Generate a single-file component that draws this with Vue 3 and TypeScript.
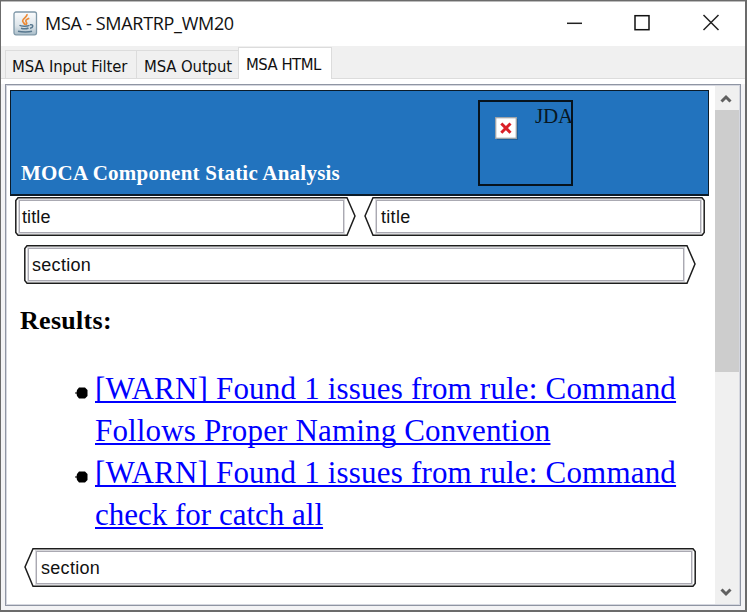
<script setup lang="ts">
import { ref } from 'vue'

type Side = 'open' | 'close'
interface Tag { label: string; side: Side; width: number }

const tabs = ['MSA Input Filter', 'MSA Output', 'MSA HTML']
const active = ref('MSA HTML')

const titleTags: Tag[] = [
  { label: 'title', side: 'open', width: 341 },
  { label: 'title', side: 'close', width: 341 },
]
const sectionOpen: Tag = { label: 'section', side: 'open', width: 672 }
const sectionClose: Tag = { label: 'section', side: 'close', width: 672 }

const results: string[][] = [
  ['[WARN] Found 1 issues from rule: Command', 'Follows Proper Naming Convention'],
  ['[WARN] Found 1 issues from rule: Command', 'check for catch all'],
]

// Outline of a tag marker: chamfered corners on one side, a point on the other.
function outline(tag: Tag): string {
  const w = tag.width
  return tag.side === 'open'
    ? `M3 .8H${w - 9}L${w - 1} 19L${w - 9} 38.2H3L.8 35.5V3.5Z`
    : `M${w - 3} .8H9L1 19L9 38.2H${w - 3}L${w - 0.8} 35.5V3.5Z`
}
</script>

<template>
  <div class="window">
    <header class="titlebar">
      <svg class="java" width="25" height="25" viewBox="0 0 25 25">
        <defs>
          <linearGradient id="jbg" x1="0" y1="0" x2="0" y2="1">
            <stop offset="0" stop-color="#fbfcfd" />
            <stop offset=".6" stop-color="#dde5ea" />
            <stop offset="1" stop-color="#a9bdc9" />
          </linearGradient>
        </defs>
        <rect x="1" y="1" width="22.5" height="22.8" rx="2" fill="url(#jbg)" stroke="#7f98a8" stroke-width="1.3" />
        <path d="M13.8 3.2C15 6 9.2 7.3 9.6 10C9.8 11.5 11.7 12.4 11.9 14M16.3 7.2C13.2 8.4 12 9.7 13.3 11.2C14.2 12.3 13.5 13.1 12.7 13.7" fill="none" stroke="#ec8a35" stroke-width="1.7" />
        <path d="M6.5 14.2C8 15.5 14 15.5 16.5 14.4M8 17.2C10.5 18 13.5 17.9 15.5 17M5 20.2C9 21.2 16 21.2 19 20.2M17 13.8C20.8 13 20.5 16.7 17 17.2" fill="none" stroke="#58788f" stroke-width="1.5" />
      </svg>
      <span class="caption">MSA - SMARTRP_WM20</span>
      <svg class="controls" width="160" height="20" viewBox="0 0 160 20">
        <path d="M1 10.3H16" stroke="#222" stroke-width="1.5" />
        <rect x="69" y="2.7" width="14" height="14" fill="none" stroke="#111" stroke-width="1.5" />
        <path d="M137.5 2L152.5 17M152.5 2L137.5 17" stroke="#222" stroke-width="1.5" />
      </svg>
    </header>

    <nav class="tabs">
      <button
        v-for="(tab, i) in tabs"
        :key="tab"
        class="tab"
        :class="['tab-' + i, { active: tab === active }]"
        @click="active = tab"
      ><span>{{ tab }}</span></button>
    </nav>

    <div class="pane">
      <div class="viewport">
        <main class="page">
          <section class="banner">
            <h1>MOCA Component Static Analysis</h1>
            <div class="logo">
              <svg class="broken" width="24" height="24" viewBox="0 0 24 24">
                <rect x="2" y="2" width="21" height="21" fill="#174f80" opacity=".55" />
                <rect x=".7" y=".7" width="20.6" height="20.6" fill="#fff" stroke="#a2a5a8" stroke-width="1.3" />
                <path d="M6.3 6.5L15.5 15.7M15.5 6.5L6.3 15.7" stroke="#d91f27" stroke-width="3" />
              </svg>
              <span>JDA</span>
            </div>
          </section>

          <div class="title-row">
            <div v-for="tag in titleTags" :key="tag.side" class="tag" :class="tag.side">
              <svg class="shape" :width="tag.width" height="39"><path :d="outline(tag)" /></svg>
              <span class="field">{{ tag.label }}</span>
            </div>
          </div>

          <div class="tag wide" :class="sectionOpen.side">
            <svg class="shape" :width="sectionOpen.width" height="39"><path :d="outline(sectionOpen)" /></svg>
            <span class="field">{{ sectionOpen.label }}</span>
          </div>

          <h2>Results:</h2>
          <ul>
            <li v-for="(lines, i) in results" :key="i">
              <svg class="dot" width="13" height="12" viewBox="0 0 13 12"><path d="M4 .5H10L12.500 3V9L10 11.500H4L2 9L1.500 6.500H0V5.500H1.500L2 3Z" /></svg>
              <a><span v-for="line in lines" :key="line" class="line">{{ line }}</span></a>
            </li>
          </ul>

          <div class="tag wide" :class="sectionClose.side">
            <svg class="shape" :width="sectionClose.width" height="39"><path :d="outline(sectionClose)" /></svg>
            <span class="field">{{ sectionClose.label }}</span>
          </div>
        </main>

        <aside class="scrollbar">
          <svg width="23" height="24" viewBox="0 0 23 24"><path d="M6.5 15.5L11 11L15.5 15.5" /></svg>
          <div class="thumb"></div>
          <svg width="23" height="25" viewBox="0 0 23 25"><path d="M6.5 10.5L11 15L15.5 10.5" /></svg>
        </aside>
      </div>
    </div>
  </div>
</template>

<style>
body { overflow: hidden; background: #fff; }
</style>

<style scoped>
* { box-sizing: border-box; }
.window {
  width: 747px; height: 612px; display: flex; flex-direction: column;
  background: #f0f0f0; border: 1px solid #6b6b6b; border-right-width: 2px; border-bottom-width: 2px;
}
.titlebar {
  height: 45px; flex: none; display: flex; align-items: center; background: #fff;
  padding-left: 12px; border-top: 1px solid #bbb;
}
.java { margin-top: -2px; }
.caption {
  font: 18px/24px "Open Sans", "Noto Sans", sans-serif; color: #111;
  margin: -2px 0 0 7px; letter-spacing: -.3px; white-space: nowrap;
}
.controls { margin: -2px 19px 0 auto; }

.tabs { height: 33px; flex: none; display: flex; align-items: flex-end; padding-left: 4px; border-bottom: 1px solid #dcdcdc; }
.tab {
  height: 28px; padding: 2px 0 0 6px; background: #f0f0f0; border: 1px solid #dcdcdc; border-right: 0; border-bottom: 0;
  font: 16.5px/28px "DejaVu Sans Condensed", "DejaVu Sans", sans-serif; color: #111; text-align: left; white-space: nowrap;
}
.tab-0 { width: 131px; letter-spacing: -.12px; }
.tab-1 { width: 102px; letter-spacing: -.1px; padding-left: 7px; }
.tab-2 { width: 94px; letter-spacing: -.5px; padding-left: 7px; }
.tab.active { height: 33px; margin-bottom: -2px; background: #fff; border-right: 1px solid #dcdcdc; line-height: 29px; padding-bottom: 3px; }

.pane { flex: 1; min-height: 0; padding: 5px 4px 4px 4px; background: linear-gradient(#fff 0 5px, #f3f3f5 5px); }
.viewport { height: 100%; display: flex; border: 1px solid #8f95a3; box-shadow: inset 0 0 0 1px #d5d7df; padding: 1px; background: #fff; }
.page { flex: 1; min-width: 0; padding: 4px 0 0 3px; }

.banner {
  width: 699px; height: 106px; display: flex; background: #2273be; border: 1px solid #0b1b29;
  border-width: 1.5px 1px 2px; padding-left: 10px;
}
h1 {
  margin: 70px 0 0; width: 457px; font: bold 21px/24px "Liberation Serif", serif; color: #fff;
  letter-spacing: .23px; white-space: nowrap;
}
.logo {
  width: 95px; height: 86px; margin-top: 9px; border: 2px solid #07131d; display: flex; align-items: flex-start; flex: none;
  font: 21px/24px "Liberation Serif", serif; color: #081722;
}
.broken { margin: 15px 0 0 15px; flex: none; }
.logo span { margin: 2px 0 0 16px; letter-spacing: -.2px; }

.title-row { display: flex; gap: 8px; padding-left: 5px; margin-top: 1px; }
.tag { position: relative; width: 341px; height: 39px; padding: 3px 12px 3px 4px; display: flex; }
.tag.close { padding: 3px 4px 3px 12px; }
.tag.wide { width: 672px; margin: 9px 0 0 14px; }
.shape { position: absolute; left: 0; top: 0; }
.shape path { fill: #fff; stroke: #1d1d1d; stroke-width: 1.5px; }
.field {
  position: relative; flex: 1; background: #fff; border: 1px solid #aaa9b2; box-shadow: 0 0 0 1px #d9d9dd;
  font: 18px/33px "Liberation Sans", sans-serif; letter-spacing: .3px; color: #111; padding-left: 4px;
}
.title-row .open .field { letter-spacing: .1px; padding-left: 2px; }
.wide.open .field { padding-left: 3px; }

h2 { margin: 20px 0 0 10px; font: bold 26px/34px "Liberation Serif", serif; color: #000; letter-spacing: .3px; }
ul { list-style: none; margin: 30px 0 0 65px; padding: 0; }
li { display: flex; align-items: flex-start; height: 84px; }
.dot { margin: 19px 7px 0 0; flex: none; }
a { color: #00f; font: 31px/42px "Liberation Serif", serif; }
.line { display: block; width: max-content; height: 42px; letter-spacing: .16px; white-space: nowrap; text-decoration: underline; text-decoration-thickness: 2px; text-underline-offset: 2px; text-decoration-skip-ink: none; }
.line:first-child { letter-spacing: .19px; }
li:last-child .line:last-child { letter-spacing: 0; }
ul + .tag.wide { margin-top: 12px; }

.scrollbar { width: 24px; flex: none; display: flex; flex-direction: column; background: #f0f0f0; }
.scrollbar svg { flex: none; }
.scrollbar path { fill: none; stroke: #606060; stroke-width: 3px; }
.thumb { height: 262px; margin-bottom: auto; background: #cdcdcd; }
</style>
